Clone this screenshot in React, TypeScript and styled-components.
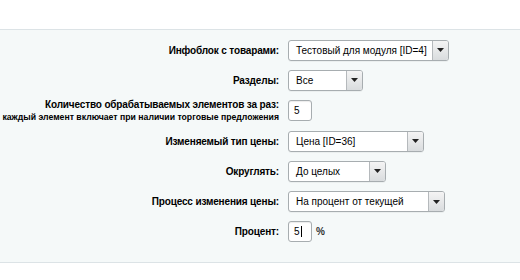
import styled, { createGlobalStyle } from 'styled-components'

const GlobalStyle = createGlobalStyle`
  html, body {
    margin: 0;
    padding: 0;
    background: #fff;
    font-family: "Liberation Sans", Arial, sans-serif;
  }
`

type Row =
  | { kind: 'select'; label: string; value: string; width: number }
  | { kind: 'input'; label: string; value: string; note?: string; suffix?: string; caret?: boolean }

const rows: Row[] = [
  { kind: 'select', label: 'Инфоблок с товарами:', value: 'Тестовый для модуля [ID=4]', width: 161 },
  { kind: 'select', label: 'Разделы:', value: 'Все', width: 75 },
  {
    kind: 'input',
    label: 'Количество обрабатываемых элементов за раз:',
    note: 'каждый элемент включает при наличии торговые предложения',
    value: '5',
  },
  { kind: 'select', label: 'Изменяемый тип цены:', value: 'Цена [ID=36]', width: 136 },
  { kind: 'select', label: 'Округлять:', value: 'До целых', width: 98 },
  { kind: 'select', label: 'Процесс изменения цены:', value: 'На процент от текущей', width: 157 },
  { kind: 'input', label: 'Процент:', value: '5', suffix: '%', caret: true },
]

const App = () => {
  return (
    <>
      <GlobalStyle />
      <Page>
        <Panel>
          <Form>
            {rows.map((row) => (
              <FormRow key={row.label}>
                <Label>
                  <LabelText>{row.label}</LabelText>
                  {row.kind === 'input' && row.note && <Note>{row.note}</Note>}
                </Label>
                <Field>
                  {row.kind === 'select' ? (
                    <SelectBox $width={row.width}>
                      <SelectValue>{row.value}</SelectValue>
                      <Arrow>
                        <svg width="7" height="4" viewBox="0 0 7 4">
                          <path d="M0 0h7L3.5 4z" fill="#222" />
                        </svg>
                      </Arrow>
                    </SelectBox>
                  ) : (
                    <>
                      <TextInput>
                        {row.value}
                        {row.caret && <Caret />}
                      </TextInput>
                      {row.suffix && <Suffix>{row.suffix}</Suffix>}
                    </>
                  )}
                </Field>
              </FormRow>
            ))}
          </Form>
        </Panel>
      </Page>
    </>
  )
}

export default App

const Page = styled.div`
  width: 520px;
  height: 280px;
  padding-top: 29px;
  box-sizing: border-box;
  background: #fff;
`

const Panel = styled.div`
  background: #f5f9f9;
  border-top: 1px solid #dce3e6;
  border-bottom: 1px solid #dce3e6;
  padding: 5px 0 15px;
`

const Form = styled.div`
  display: flex;
  flex-direction: column;
`

const FormRow = styled.div`
  display: grid;
  grid-template-columns: 279px 1fr;
  column-gap: 9px;
  align-items: center;
  height: 30.3px;
`

const Label = styled.div`
  display: flex;
  flex-direction: column;
  align-items: flex-end;
  text-align: right;
  color: #000;
`

const LabelText = styled.span`
  font-size: 10px;
  font-weight: bold;
  letter-spacing: -0.15px;
  line-height: 13px;
`

const Note = styled.span`
  font-size: 8.7px;
  font-weight: bold;
  line-height: 11px;
  margin-top: 1px;
`

const Field = styled.div`
  display: flex;
  align-items: center;
  gap: 4px;
`

const SelectBox = styled.div<{ $width: number }>`
  width: ${(p) => p.$width}px;
  height: 21px;
  box-sizing: border-box;
  display: flex;
  align-items: stretch;
  background: #fff;
  border: 1px solid #a7adb0;
  border-radius: 3px;
  box-shadow: 0 1px 0 rgba(0, 0, 0, 0.04);
  overflow: hidden;
`

const SelectValue = styled.div`
  flex: 1;
  padding-left: 7px;
  display: flex;
  align-items: center;
  font-size: 10px;
  color: #000;
  white-space: nowrap;
  overflow: hidden;
`

const Arrow = styled.div`
  width: 15px;
  display: flex;
  align-items: center;
  justify-content: center;
  border-left: 1px solid #b5b9bc;
  background: linear-gradient(#f4f4f4, #d9dcde);
`

const TextInput = styled.div`
  width: 24px;
  height: 21px;
  box-sizing: border-box;
  display: flex;
  align-items: center;
  padding-left: 5px;
  background: #fff;
  border: 1px solid #a7adb0;
  border-radius: 3px;
  box-shadow: inset 0 1px 1px rgba(0, 0, 0, 0.08);
  font-size: 10px;
  color: #000;
`

const Caret = styled.span`
  display: inline-block;
  width: 1px;
  height: 11px;
  background: #000;
  margin-left: 1px;
`

const Suffix = styled.span`
  font-size: 10px;
  font-weight: bold;
  color: #333;
`
